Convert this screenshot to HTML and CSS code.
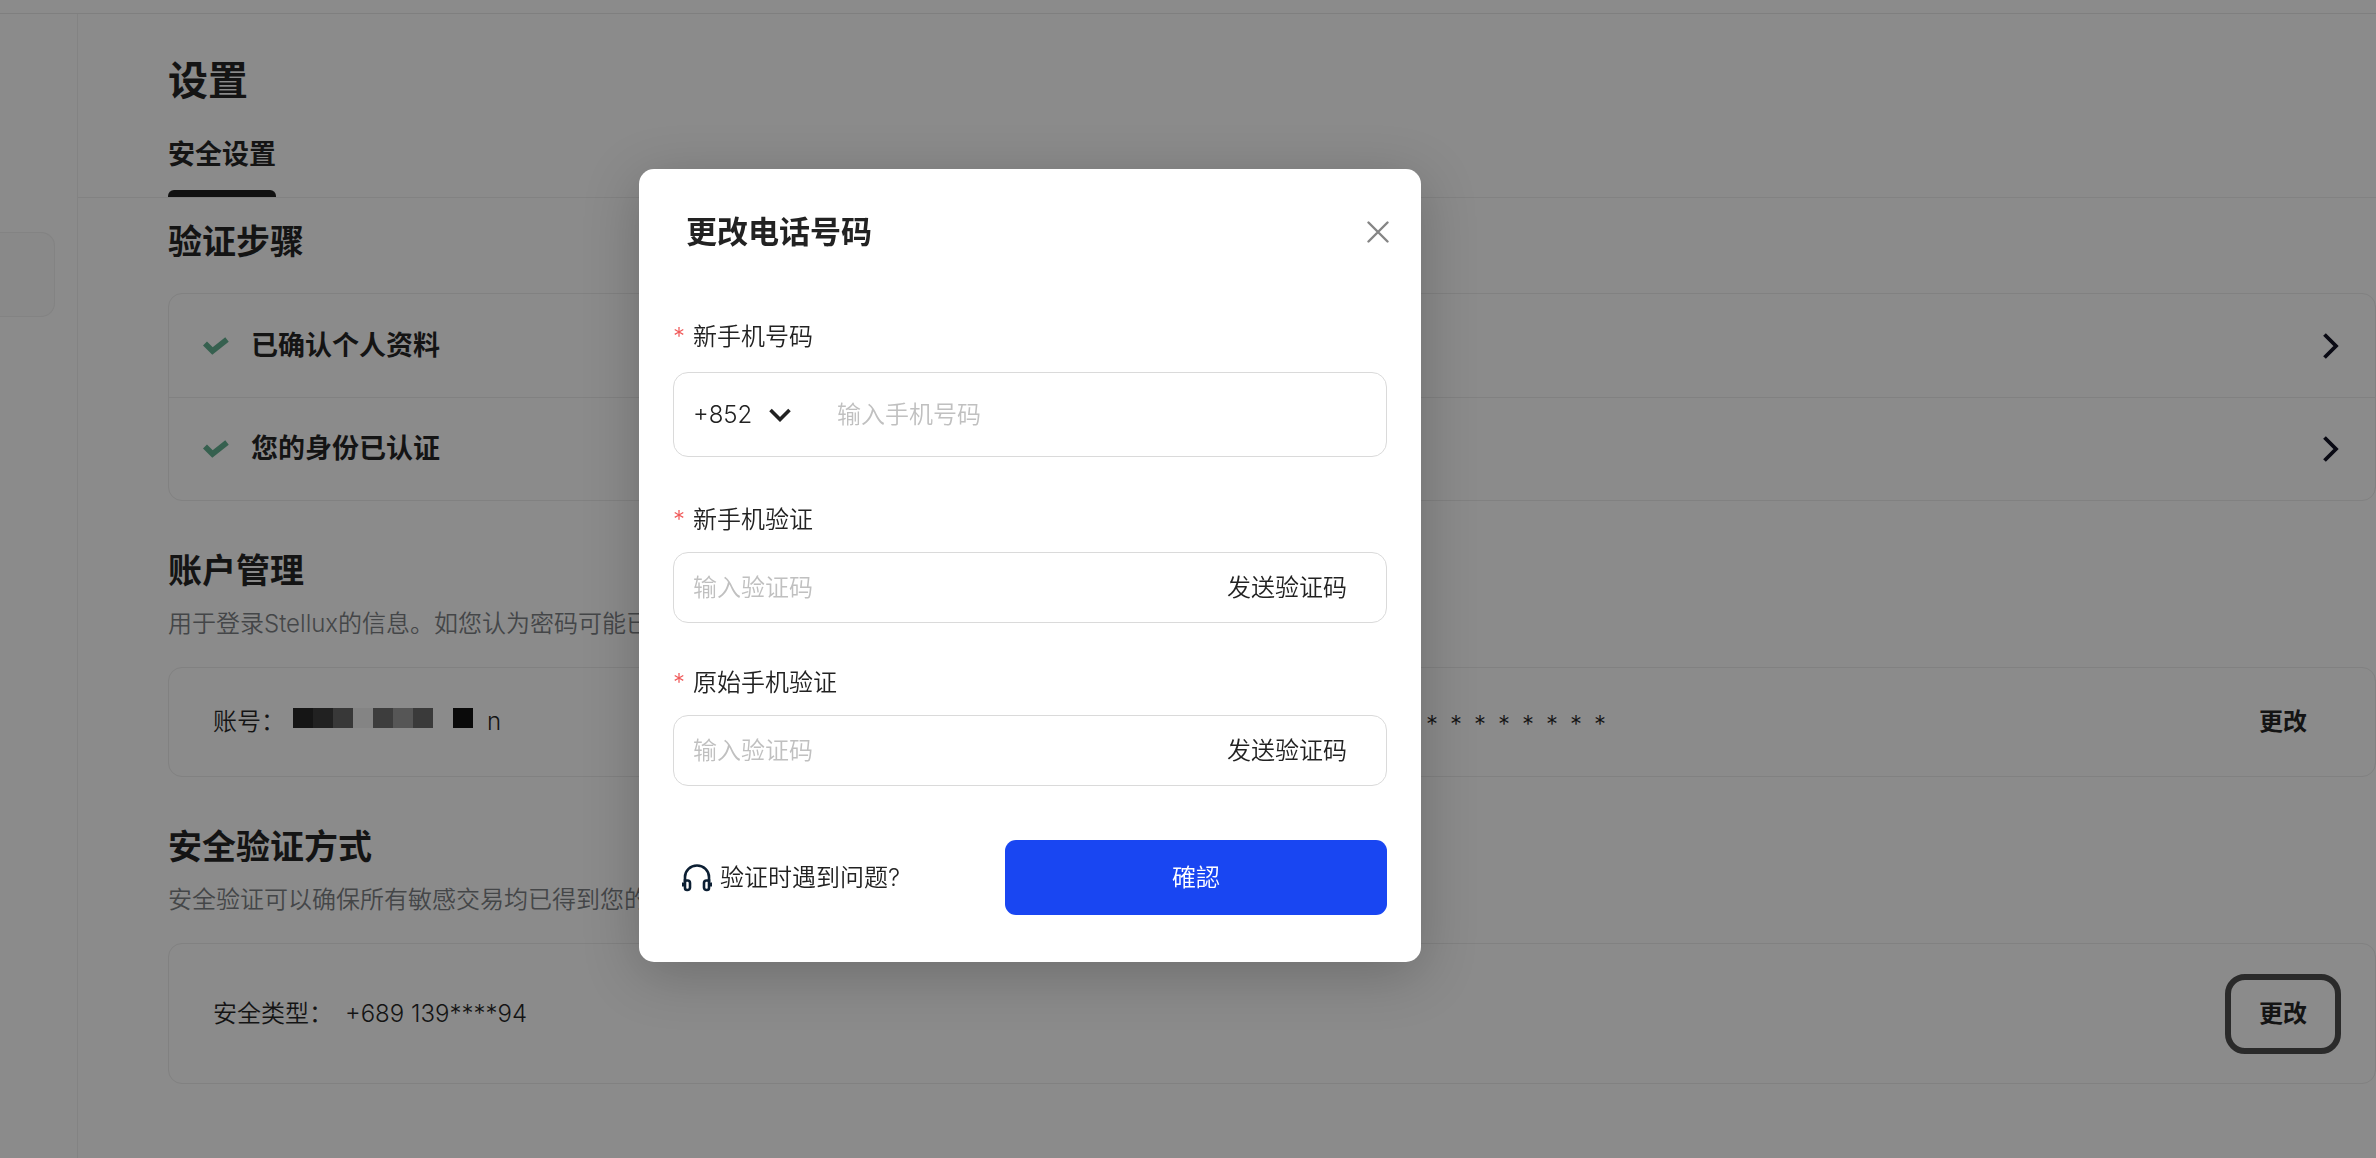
FILE: index.html
```html
<!DOCTYPE html>
<html lang="zh-CN">
<head>
    <meta charset="UTF-8">
    <meta name="viewport" content="width=device-width, initial-scale=1.0">
    <title>设置</title>
    <link rel="stylesheet" href="styles.css">
</head>
<body>
    <div class="topbar"></div>
    <div class="layout">
        <aside class="sidebar">
            <div class="sidebar-item"></div>
        </aside>
        <main class="content">
            <header class="page-header">
                <h1>设置</h1>
                <nav class="tabs">
                    <a class="tab active" href="#security">安全设置</a>
                </nav>
            </header>

            <section class="steps">
                <h2>验证步骤</h2>
                <div class="card">
                    <a class="step" href="#profile">
                        <svg class="check" viewBox="0 0 26 18"><path d="M2 6.5 L9.5 14 L24 2.5" fill="none" stroke="#36604f" stroke-width="5.6"/></svg>
                        <span>已确认个人资料</span>
                        <svg class="arrow" viewBox="0 0 16 26"><path d="M1.5 1.5 L13 13 L1.5 24.5" fill="none" stroke="#0a0a14" stroke-width="3.8"/></svg>
                    </a>
                    <a class="step" href="#identity">
                        <svg class="check" viewBox="0 0 26 18"><path d="M2 6.5 L9.5 14 L24 2.5" fill="none" stroke="#36604f" stroke-width="5.6"/></svg>
                        <span>您的身份已认证</span>
                        <svg class="arrow" viewBox="0 0 16 26"><path d="M1.5 1.5 L13 13 L1.5 24.5" fill="none" stroke="#0a0a14" stroke-width="3.8"/></svg>
                    </a>
                </div>
            </section>

            <section class="account">
                <h2>账户管理</h2>
                <p class="desc">用于登录Stellux的信息。如您认为密码可能已</p>
                <div class="card row">
                    <div class="account-name">
                        <span>账号：</span>
                        <span class="mosaic"><i></i><i></i><i></i><i></i><i></i><i></i><i></i><i></i><i></i></span>
                        <span>n</span>
                    </div>
                    <div class="mask">
                        <span>*</span><span>*</span><span>*</span><span>*</span><span>*</span><span>*</span><span>*</span><span>*</span>
                    </div>
                    <button class="change" type="button">更改</button>
                </div>
            </section>

            <section class="methods">
                <h2>安全验证方式</h2>
                <p class="desc">安全验证可以确保所有敏感交易均已得到您的</p>
                <div class="card row tall">
                    <div class="method">
                        <span>安全类型：</span>
                        <span>+689 139****94</span>
                    </div>
                    <button class="change focused" type="button">更改</button>
                </div>
            </section>
        </main>
    </div>

    <div class="overlay">
        <form class="modal" role="dialog" aria-labelledby="modal-title">
            <div class="modal-header">
                <h3 id="modal-title">更改电话号码</h3>
                <button class="close" type="button" aria-label="关闭">
                    <svg viewBox="0 0 22 22"><path d="M1.5 1.5 L20.5 20.5 M20.5 1.5 L1.5 20.5" fill="none" stroke="#858585" stroke-width="2.4" stroke-linecap="round"/></svg>
                </button>
            </div>

            <label class="label" for="phone"><span class="star">*</span>新手机号码</label>
            <div class="field phone">
                <div class="code">
                    <select aria-label="区号">
                        <option>+852</option>
                    </select>
                    <svg viewBox="0 0 22 14"><path d="M1.5 2 L11 11.5 L20.5 2" fill="none" stroke="#222222" stroke-width="3.6"/></svg>
                </div>
                <input id="phone" type="tel" placeholder="输入手机号码">
            </div>

            <label class="label" for="new-code"><span class="star">*</span>新手机验证</label>
            <div class="field">
                <input id="new-code" type="text" placeholder="输入验证码">
                <button class="send" type="button">发送验证码</button>
            </div>

            <label class="label" for="old-code"><span class="star">*</span>原始手机验证</label>
            <div class="field">
                <input id="old-code" type="text" placeholder="输入验证码">
                <button class="send" type="button">发送验证码</button>
            </div>

            <div class="modal-footer">
                <a class="help" href="#help">
                    <svg viewBox="0 0 30 28" fill="none" stroke="#0c1f33">
                        <path d="M3 18 V13 A12 11.5 0 0 1 27 13 V18" stroke-width="2.6"/>
                        <path d="M3 16.5 H5.5 A2.5 2.5 0 0 1 8 19 V23.5 A2.5 2.5 0 0 1 5.5 26 H5 A2 2 0 0 1 3 24 Z" stroke-width="2.6"/>
                        <path d="M27 16.5 H24.5 A2.5 2.5 0 0 0 22 19 V23.5 A2.5 2.5 0 0 0 24.5 26 H25 A2 2 0 0 0 27 24 Z" stroke-width="2.6"/>
                        <path d="M1.2 18.5 V22.5 M28.8 18.5 V22.5" stroke-width="2.4"/>
                    </svg>
                    验证时遇到问题?
                </a>
                <button class="confirm" type="submit" lang="zh-TW">確認</button>
            </div>
        </form>
    </div>
</body>
</html>
```

FILE: styles.css
```css
* {
    box-sizing: border-box;
}
body {
    margin: 0;
    min-height: 100vh;
    display: flex;
    flex-direction: column;
    overflow: hidden;
    font-family: Inter, "Noto Sans CJK SC", sans-serif;
    font-size: 24px;
    font-weight: 350;
    line-height: 36px;
    color: #141414;
    background-color: #8b8b8b;
}
h1, h2, h3, p {
    margin: 0;
}
a {
    color: inherit;
    text-decoration: none;
}
button, input, select {
    font: inherit;
    color: inherit;
    background: none;
    border: none;
    padding: 0;
}
button {
    cursor: pointer;
}

/* page */
.topbar {
    height: 14px;
    border-bottom: 1px solid #7f7f7f;
}
.layout {
    flex: 1;
    display: flex;
}
.sidebar {
    width: 78px;
    padding: 218px 22px 0 0;
    border-right: 1px solid #838383;
}
.sidebar-item {
    height: 85px;
    border: 1px solid #838383;
    border-left: none;
    border-radius: 0 14px 14px 0;
    background-color: #898989;
}
.content {
    flex: 1;
    min-width: 0;
}
.page-header {
    padding: 37px 0 0 90px;
    border-bottom: 1px solid #828282;
}
h1 {
    font-size: 40px;
    line-height: 60px;
    font-weight: 600;
}
.tabs {
    display: flex;
    margin-top: 24px;
}
.tab {
    font-size: 27px;
    line-height: 40px;
    font-weight: 600;
}
.tab.active::after {
    content: "";
    display: block;
    height: 7px;
    margin-top: 15px;
    border-radius: 6px 6px 0 0;
    background-color: #111;
}
section {
    padding-left: 90px;
}
.steps {
    padding-top: 19px;
}
.account, .methods {
    padding-top: 45px;
}
h2 {
    font-size: 34px;
    line-height: 50px;
    font-weight: 600;
}
.desc {
    margin-top: 10px;
    color: #444648;
}
.card {
    margin-top: 26px;
    border: 1px solid #818181;
    border-radius: 14px;
}
.desc + .card {
    margin-top: 25px;
}
.step {
    display: flex;
    align-items: center;
    height: 103px;
    padding: 0 36px 0 34px;
    font-size: 27px;
    line-height: 40px;
    font-weight: 600;
}
.step + .step {
    border-top: 1px solid #818181;
}
.check {
    width: 26px;
    height: 18px;
    margin-right: 22px;
}
.arrow {
    width: 16px;
    height: 26px;
    margin-left: auto;
}
.row {
    display: flex;
    align-items: center;
    height: 110px;
    padding: 0 34px 0 44px;
}
.row.tall {
    height: 141px;
}
.account-name {
    flex: 0 0 57%;
    display: flex;
    align-items: center;
}
.mosaic {
    display: flex;
    margin: 0 14px 8px 8px;
}
.mosaic i {
    width: 20px;
    height: 20px;
}
.mosaic i:nth-child(1) { background-color: #151515; }
.mosaic i:nth-child(2) { background-color: #212121; }
.mosaic i:nth-child(3) { background-color: #383838; }
.mosaic i:nth-child(4) { background-color: #848484; }
.mosaic i:nth-child(5) { background-color: #3d3d3d; }
.mosaic i:nth-child(6) { background-color: #565656; }
.mosaic i:nth-child(7) { background-color: #3a3a3a; }
.mosaic i:nth-child(9) { background-color: #0a0a0a; }
.mask {
    display: grid;
    grid-template-columns: repeat(8, 24px);
    padding-top: 6px;
}
.method {
    display: flex;
    gap: 12px;
}
.change {
    margin-left: auto;
    padding: 16px 28px;
    border: 6px solid transparent;
    border-radius: 20px;
    font-weight: 600;
}
.change.focused {
    border-color: #2a2a2a;
}

/* phone dialog */
.overlay {
    position: fixed;
    inset: 0;
    display: flex;
    justify-content: center;
    align-items: flex-start;
    padding: 169px 316px 0 0;
}
.modal {
    width: 782px;
    padding: 38px 34px 47px;
    border-radius: 15px;
    color: #222;
    background-color: #fff;
    box-shadow: 0 12px 56px rgba(0, 0, 0, 0.22);
}
.modal-header {
    display: flex;
    justify-content: space-between;
    align-items: center;
    padding-left: 13px;
    margin: 0 -2px 62px 0;
}
h3 {
    font-size: 31px;
    line-height: 50px;
    font-weight: 600;
}
.close {
    display: flex;
}
.close svg {
    width: 22px;
    height: 22px;
}
.label {
    display: flex;
    gap: 8px;
}
.star {
    color: #f05a5a;
}
.field {
    display: flex;
    align-items: center;
    height: 71px;
    margin: 14px 0 42px;
    padding: 0 39px 0 19px;
    border: 1px solid #dadada;
    border-radius: 15px;
}
.field.phone {
    height: 85px;
    margin: 17px 0 45px;
}
.field input {
    flex: 1;
    min-width: 0;
    outline: none;
}
.field input::placeholder {
    color: #c0c0c0;
    opacity: 1;
}
.code {
    display: flex;
    align-items: center;
    gap: 16px;
    margin-right: 46px;
}
.code select {
    appearance: none;
    outline: none;
}
.code svg {
    width: 22px;
    height: 14px;
}
.modal-footer {
    display: flex;
    justify-content: space-between;
    align-items: center;
    margin-top: 54px;
}
.help {
    display: flex;
    align-items: center;
    gap: 8px;
    padding-left: 9px;
}
.help svg {
    width: 30px;
    height: 28px;
}
.confirm {
    width: 382px;
    height: 75px;
    border-radius: 11px;
    font-family: Inter, "Noto Sans CJK TC", sans-serif;
    color: #fff;
    background-color: #1946f2;
}
```
